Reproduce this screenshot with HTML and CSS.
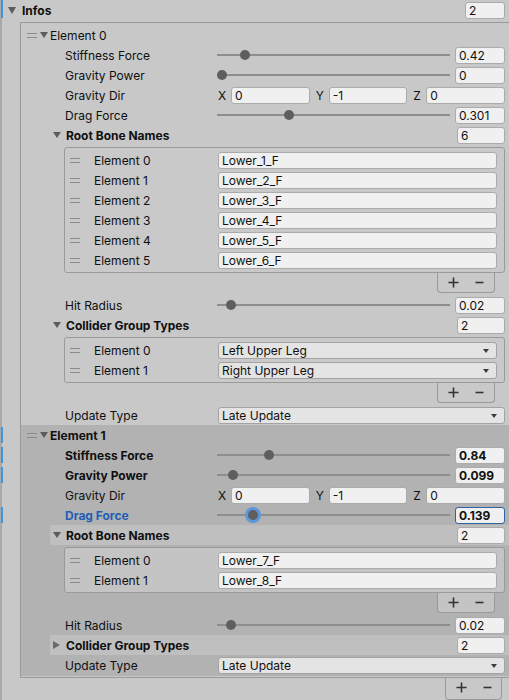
FILE: index.html
```html
<!DOCTYPE html>
<html>
<head>
<meta charset="utf-8">
<link rel="stylesheet" href="styles.css">
</head>
<body>
<div class="inspector">
  <div class="row top mod0">
    <span class="tri down big"></span><span class="title">Infos</span>
    <span class="field cnt-top">2</span>
  </div>

  <div class="list">
    <!-- Element 0 -->
    <div class="item">
      <div class="row ehead"><span class="handle"></span><span class="tri down"></span><span class="etext">Element 0</span></div>
      <div class="row prop"><span class="lbl">Stiffness Force</span><div class="slider"><div class="track"><span class="knob" style="--v:0.105"></span></div><span class="field val">0.42</span></div></div>
      <div class="row prop"><span class="lbl">Gravity Power</span><div class="slider"><div class="track"><span class="knob" style="--v:0"></span></div><span class="field val">0</span></div></div>
      <div class="row prop"><span class="lbl">Gravity Dir</span><div class="vec"><div class="axis"><span class="ax">X</span><span class="field">0</span></div><div class="axis"><span class="ax">Y</span><span class="field">-1</span></div><div class="axis"><span class="ax">Z</span><span class="field">0</span></div></div></div>
      <div class="row prop"><span class="lbl">Drag Force</span><div class="slider"><div class="track"><span class="knob" style="--v:0.301"></span></div><span class="field val">0.301</span></div></div>
      <div class="row sub"><span class="tri down"></span><span class="stext">Root Bone Names</span><span class="field cnt">6</span></div>
      <div class="ilist">
        <div class="irow"><span class="handle"></span><span class="ilbl">Element 0</span><span class="field">Lower_1_F</span></div>
        <div class="irow"><span class="handle"></span><span class="ilbl">Element 1</span><span class="field">Lower_2_F</span></div>
        <div class="irow"><span class="handle"></span><span class="ilbl">Element 2</span><span class="field">Lower_3_F</span></div>
        <div class="irow"><span class="handle"></span><span class="ilbl">Element 3</span><span class="field">Lower_4_F</span></div>
        <div class="irow"><span class="handle"></span><span class="ilbl">Element 4</span><span class="field">Lower_5_F</span></div>
        <div class="irow"><span class="handle"></span><span class="ilbl">Element 5</span><span class="field">Lower_6_F</span></div>
      </div>
      <div class="ifoot">
        <svg class="plus" width="11" height="11" viewBox="0 0 11 11"><path d="M5.5 0.5v10M0.5 5.5h10" stroke="#333" stroke-width="1.6"/></svg>
        <svg class="minus" width="9" height="11" viewBox="0 0 9 11"><path d="M0.5 5.5h8" stroke="#333" stroke-width="1.6"/></svg>
      </div>
      <div class="row prop gap"><span class="lbl">Hit Radius</span><div class="slider"><div class="track"><span class="knob" style="--v:0.04"></span></div><span class="field val">0.02</span></div></div>
      <div class="row sub"><span class="tri down"></span><span class="stext">Collider Group Types</span><span class="field cnt">2</span></div>
      <div class="ilist">
        <div class="irow"><span class="handle"></span><span class="ilbl">Element 0</span><span class="drop">Left Upper Leg</span></div>
        <div class="irow"><span class="handle"></span><span class="ilbl">Element 1</span><span class="drop">Right Upper Leg</span></div>
      </div>
      <div class="ifoot">
        <svg class="plus" width="11" height="11" viewBox="0 0 11 11"><path d="M5.5 0.5v10M0.5 5.5h10" stroke="#333" stroke-width="1.6"/></svg>
        <svg class="minus" width="9" height="11" viewBox="0 0 9 11"><path d="M0.5 5.5h8" stroke="#333" stroke-width="1.6"/></svg>
      </div>
      <div class="row prop gap"><span class="lbl">Update Type</span><span class="drop">Late Update</span></div>
    </div>

    <!-- Element 1 -->
    <div class="item dark">
      <div class="row ehead mod"><span class="handle"></span><span class="tri down"></span><span class="etext bold">Element 1</span></div>
      <div class="row prop mod"><span class="lbl bold">Stiffness Force</span><div class="slider"><div class="track"><span class="knob" style="--v:0.21"></span></div><span class="field val bold">0.84</span></div></div>
      <div class="row prop mod"><span class="lbl bold">Gravity Power</span><div class="slider"><div class="track"><span class="knob" style="--v:0.0495"></span></div><span class="field val bold">0.099</span></div></div>
      <div class="row prop"><span class="lbl">Gravity Dir</span><div class="vec"><div class="axis"><span class="ax">X</span><span class="field">0</span></div><div class="axis"><span class="ax">Y</span><span class="field">-1</span></div><div class="axis"><span class="ax">Z</span><span class="field">0</span></div></div></div>
      <div class="row prop mod"><span class="lbl bold focus">Drag Force</span><div class="slider"><div class="track"><span class="knob focus" style="--v:0.139"></span></div><span class="field val bold focused">0.139</span></div></div>
      <div class="row sub hl"><span class="tri down"></span><span class="stext">Root Bone Names</span><span class="field cnt">2</span></div>
      <div class="ilist">
        <div class="irow"><span class="handle"></span><span class="ilbl">Element 0</span><span class="field">Lower_7_F</span></div>
        <div class="irow"><span class="handle"></span><span class="ilbl">Element 1</span><span class="field">Lower_8_F</span></div>
      </div>
      <div class="ifoot">
        <svg class="plus" width="11" height="11" viewBox="0 0 11 11"><path d="M5.5 0.5v10M0.5 5.5h10" stroke="#333" stroke-width="1.6"/></svg>
        <svg class="minus" width="9" height="11" viewBox="0 0 9 11"><path d="M0.5 5.5h8" stroke="#333" stroke-width="1.6"/></svg>
      </div>
      <div class="row prop gap"><span class="lbl">Hit Radius</span><div class="slider"><div class="track"><span class="knob" style="--v:0.04"></span></div><span class="field val">0.02</span></div></div>
      <div class="row sub hl"><span class="tri right"></span><span class="stext">Collider Group Types</span><span class="field cnt">2</span></div>
      <div class="row prop"><span class="lbl">Update Type</span><span class="drop">Late Update</span></div>
    </div>
  </div>
  <div class="ofoot">
    <svg class="plus" width="11" height="11" viewBox="0 0 11 11"><path d="M5.5 0.5v10M0.5 5.5h10" stroke="#333" stroke-width="1.6"/></svg>
    <svg class="minus" width="9" height="11" viewBox="0 0 9 11"><path d="M0.5 5.5h8" stroke="#333" stroke-width="1.6"/></svg>
  </div>
</div>
</body>
</html>
```

FILE: styles.css
```css
html, body {
  margin: 0;
  padding: 0;
}
body {
  width: 509px;
  height: 700px;
  overflow: hidden;
  background: linear-gradient(to right, #a9a9a9 0 2px, #c8c8c8 2px);
  font-family: Inter, "Noto Sans", "Liberation Sans", sans-serif;
  font-size: 12px;
  color: #101010;
}
.inspector {
  width: 509px;
}
.row {
  position: relative;
  display: flex;
  align-items: center;
  height: 20px;
  box-sizing: border-box;
  white-space: nowrap;
}
.bold { font-weight: 700; }
.focus { color: #1f5fb4; }

/* modified-value markers in the left gutter */
.mod0::before,
.mod::before {
  content: "";
  position: absolute;
  top: 2px;
  bottom: 2px;
  width: 2px;
  background: #3d95db;
}
.mod0::before { left: 1px; top: 0; }
.mod::before { left: -20px; }

.top {
  padding: 0 4px 0 8px;
  margin-bottom: 2px;
}
.title {
  font-weight: 700;
  margin-left: 6px;
}
.tri {
  display: inline-block;
  width: 0;
  height: 0;
  flex: none;
}
.tri.down {
  border-left: 4px solid transparent;
  border-right: 4px solid transparent;
  border-top: 6px solid #5c5c5c;
}
.tri.big {
  border-left-width: 4.5px;
  border-right-width: 4.5px;
  border-top-width: 7px;
}
.tri.right {
  border-top: 4px solid transparent;
  border-bottom: 4px solid transparent;
  border-left: 7px solid #6a6a6a;
  margin-right: 1px;
}

.field {
  display: block;
  box-sizing: border-box;
  height: 17px;
  line-height: 15px;
  padding: 0 3px;
  background: #f0f0f0;
  border: 1px solid #ababab;
  border-radius: 3px;
  overflow: hidden;
  white-space: nowrap;
  color: #101010;
}
.field.focused {
  border-color: #2f63a3;
}
.cnt-top {
  margin-left: auto;
  width: 40px;
}
.cnt {
  margin-left: auto;
  width: 48px;
  flex: none;
}

.list {
  margin-left: 20px;
  border: 1px solid #999999;
  border-right: none;
  padding: 2px 0 1px;
}
.item {
  background: #c8c8c8;
}
.item.dark {
  background: #b2b2b2;
  padding-bottom: 1px;
}

.handle {
  display: block;
  flex: none;
  width: 10px;
  height: 5px;
  box-sizing: border-box;
  border-top: 1px solid #8a8a8a;
  border-bottom: 1px solid #8a8a8a;
}
.ehead {
  padding-left: 6px;
}
.ehead .tri {
  margin-left: 3px;
}
.etext {
  margin-left: 2px;
}

.prop {
  padding: 0 4px 0 44px;
}
.lbl {
  flex: none;
  width: 153px;
  overflow: hidden;
}
.gap {
  margin-top: 2px;
}

.slider {
  flex: 1;
  display: flex;
  align-items: center;
  height: 20px;
  margin-left: -1px;
}
.track {
  position: relative;
  flex: 1;
  height: 20px;
}
.track::before {
  content: "";
  position: absolute;
  left: 0;
  right: 0;
  top: 9px;
  height: 2px;
  background: #8e8e8e;
}
.knob {
  position: absolute;
  top: 5px;
  width: 10px;
  height: 10px;
  border-radius: 50%;
  background: #5e5e5e;
  left: calc(var(--v) * (100% - 10px));
}
.knob.focus {
  box-shadow: 0 0 0 3px #5c97da;
}
.val {
  flex: none;
  width: 50px;
  margin-left: 5px;
}

.vec {
  flex: 1;
  display: grid;
  grid-template-columns: 1fr 1fr 1fr;
  column-gap: 6px;
}
.axis {
  display: flex;
  align-items: center;
  min-width: 0;
}
.ax {
  flex: none;
  width: 13px;
}
.axis .field {
  flex: 1;
  min-width: 0;
}

.drop {
  position: relative;
  display: block;
  flex: 1;
  box-sizing: border-box;
  height: 17px;
  line-height: 15px;
  padding: 0 3px;
  background: #e4e4e4;
  border: 1px solid #a3a3a3;
  border-radius: 3px;
  white-space: nowrap;
}
.drop::after {
  content: "";
  position: absolute;
  right: 7px;
  top: 6px;
  border-left: 3.5px solid transparent;
  border-right: 3.5px solid transparent;
  border-top: 4px solid #3c3c3c;
}

.sub {
  margin-left: 29px;
  padding: 0 4px 0 3px;
}
.sub.hl {
  background: #bfbfbf;
}
.stext {
  margin-left: 5px;
  font-weight: 700;
}

.ilist {
  margin: 2px 4px 0 43px;
  border: 1px solid #9a9a9a;
  border-radius: 3px;
  padding: 2px 0;
  background: #c9c9c9;
}
.dark .ilist {
  background: #c4c4c4;
}
.irow {
  display: flex;
  align-items: center;
  height: 20px;
  padding: 0 7px 0 5px;
  white-space: nowrap;
}
.ilbl {
  flex: none;
  width: 124px;
  margin-left: 14px;
}
.irow .field,
.irow .drop {
  flex: 1;
}

.ifoot,
.ofoot {
  display: flex;
  align-items: center;
  box-sizing: border-box;
  border: 1px solid #9a9a9a;
  border-top: none;
  border-radius: 0 0 4px 4px;
  background: #c9c9c9;
}
.dark .ifoot {
  background: #c4c4c4;
}
.ifoot {
  width: 58px;
  height: 20px;
  margin-left: 416px;
  padding: 0 0 1px 10px;
}
.ofoot {
  width: 57px;
  height: 22px;
  margin-left: 445px;
  background: #c8c8c8;
  padding: 0 0 3px 10px;
}
.plus {
  display: block;
  flex: none;
}
.minus {
  display: block;
  flex: none;
  margin-left: 16px;
}
```
